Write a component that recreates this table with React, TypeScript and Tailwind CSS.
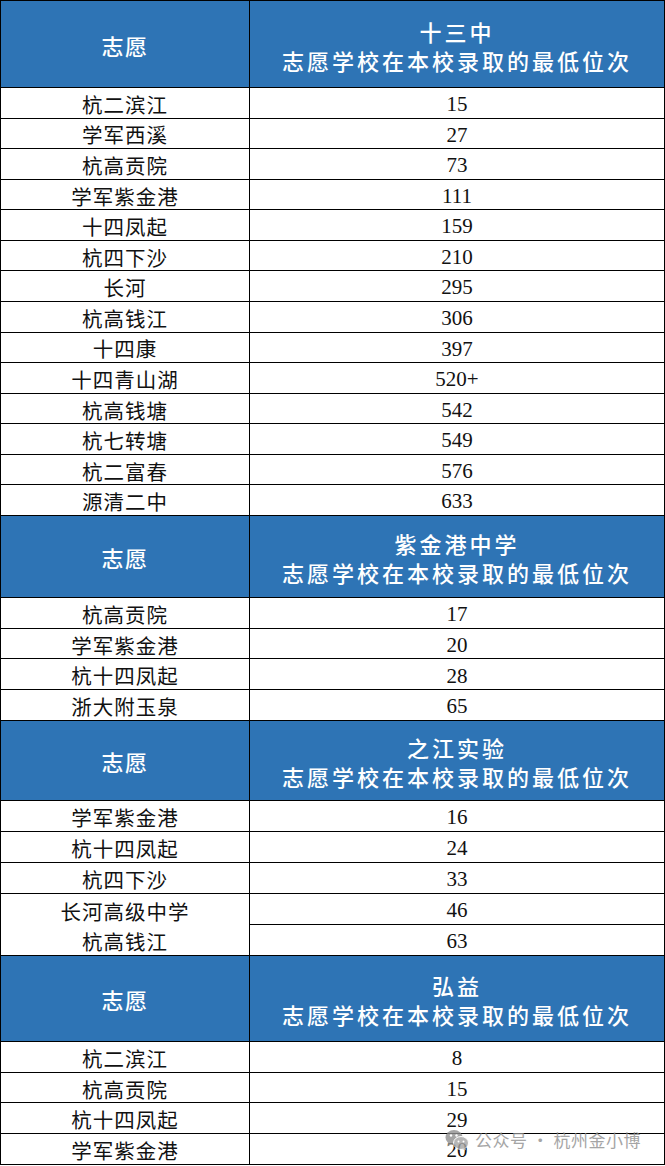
import React from "react";

const cjk = "font-['Noto_Sans_CJK_SC','Noto_Sans',sans-serif]";
const num = "font-['Liberation_Serif','Noto_Sans_CJK_SC',serif]";

function Header({ school, h }: { school: string; h: string }) {
  return (
    <>
      <div
        className={`${h} ${cjk} bg-[#2e74b5] border-r-[1.5px] border-b-[1.5px] border-black flex items-center justify-center pt-[2px] text-white text-[22px] font-medium tracking-[1.5px]`}
      >
        志愿
      </div>
      <div
        className={`${h} ${cjk} bg-[#2e74b5] border-b-[1.5px] border-black flex flex-col items-center justify-center pt-[3px] text-white text-[22px] font-medium leading-[29px] tracking-[3px]`}
      >
        <div>{school}</div>
        <div>志愿学校在本校录取的最低位次</div>
      </div>
    </>
  );
}

function Name({ h, children }: { h: string; children: React.ReactNode }) {
  return (
    <div
      className={`${h} ${cjk} border-r-[1.5px] border-b-[1.5px] border-black flex items-center justify-center pt-[3px] text-[20.5px] text-[#111] tracking-[1px]`}
    >
      {children}
    </div>
  );
}

function Value({ h, children }: { h: string; children: React.ReactNode }) {
  return (
    <div
      className={`${h} ${num} border-b-[1.5px] border-black flex items-center justify-center pt-[4px] text-[21px] text-[#111]`}
    >
      {children}
    </div>
  );
}

export default function App() {
  const s1: [string, string][] = [
    ["杭二滨江", "15"],
    ["学军西溪", "27"],
    ["杭高贡院", "73"],
    ["学军紫金港", "111"],
    ["十四凤起", "159"],
    ["杭四下沙", "210"],
    ["长河", "295"],
    ["杭高钱江", "306"],
    ["十四康", "397"],
    ["十四青山湖", "520+"],
    ["杭高钱塘", "542"],
    ["杭七转塘", "549"],
    ["杭二富春", "576"],
    ["源清二中", "633"],
  ];
  const s2: [string, string][] = [
    ["杭高贡院", "17"],
    ["学军紫金港", "20"],
    ["杭十四凤起", "28"],
    ["浙大附玉泉", "65"],
  ];
  const s3: [string, string][] = [
    ["学军紫金港", "16"],
    ["杭十四凤起", "24"],
    ["杭四下沙", "33"],
  ];
  const s4: [string, string][] = [
    ["杭二滨江", "8"],
    ["杭高贡院", "15"],
    ["杭十四凤起", "29"],
    ["学军紫金港", "20"],
  ];

  const renderRows = (rows: [string, string][], h: string) =>
    rows.map(([n, v], i) => (
      <React.Fragment key={i}>
        <Name h={h}>{n}</Name>
        <Value h={h}>{v}</Value>
      </React.Fragment>
    ));

  return (
    <div className="w-[665px] h-[1166px] bg-white overflow-hidden relative">
      <div className="border-t-[1.5px] border-l-[1.5px] border-r-[1.5px] border-black grid grid-cols-[249px_1fr]">
        <Header school="十三中" h="h-[87px]" />
        {renderRows(s1, "h-[30.57px]")}
        <Header school="紫金港中学" h="h-[82px]" />
        {renderRows(s2, "h-[30.75px]")}
        <Header school="之江实验" h="h-[80px]" />
        {renderRows(s3, "h-[31px]")}
        <div
          className={`${cjk} row-span-2 h-[62px] border-r-[1.5px] border-b-[1.5px] border-black flex flex-col items-center justify-center pt-[3px] text-[20.5px] text-[#111] tracking-[1px] leading-[30px]`}
        >
          <div>长河高级中学</div>
          <div>杭高钱江</div>
        </div>
        <Value h="h-[31px]">46</Value>
        <Value h="h-[31px]">63</Value>
        <Header school="弘益" h="h-[86px]" />
        {renderRows(s4, "h-[30.75px]")}
      </div>

      <div
        className={`${cjk} absolute left-[445px] top-[1127px] flex items-center gap-[6px] text-[17px] text-[#8f8f8f] opacity-80`}
      >
        <svg width="24" height="22" viewBox="0 0 24 22">
          <ellipse cx="9" cy="8.5" rx="8.5" ry="7.5" fill="#8f8f8f" />
          <path d="M3.5 14 L2.5 17.5 L7 15 Z" fill="#8f8f8f" />
          <ellipse cx="16" cy="14" rx="7.5" ry="6.5" fill="#a5a5a5" stroke="#fff" strokeWidth="1" />
          <path d="M20.5 19 L21.5 21.5 L17.5 20 Z" fill="#a5a5a5" />
          <circle cx="6" cy="6.5" r="1.2" fill="#fff" />
          <circle cx="11.5" cy="6.5" r="1.2" fill="#fff" />
          <circle cx="13.5" cy="12.5" r="1" fill="#fff" />
          <circle cx="18.5" cy="12.5" r="1" fill="#fff" />
        </svg>
        <span className="tracking-[0.5px]">公众号 · 杭州金小博</span>
      </div>
    </div>
  );
}
